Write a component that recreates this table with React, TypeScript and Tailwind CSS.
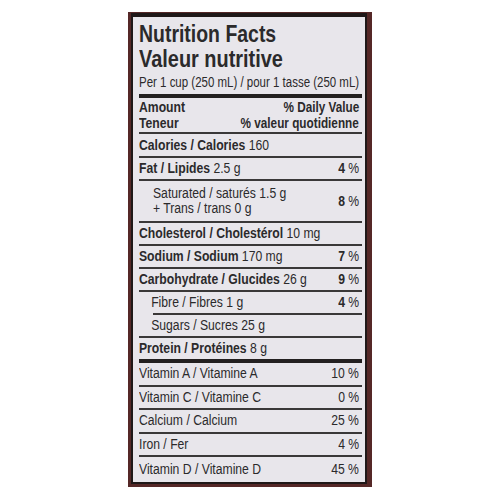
import React from "react";

const FONT = '"Liberation Sans", Arial, sans-serif';

function L({ children, className = "" }: { children: React.ReactNode; className?: string }) {
  return (
    <span className="flex-1 min-w-0 whitespace-nowrap">
      <span className={"inline-block origin-left scale-x-[0.87] whitespace-nowrap " + className}>{children}</span>
    </span>
  );
}

function P({ v, bold }: { v: string; bold?: boolean }) {
  return (
    <span className="shrink-0 pr-[3px] whitespace-nowrap">
      <span className="inline-block origin-right scale-x-[0.87] whitespace-nowrap">
        <span className={bold ? "font-bold" : ""}>{v}</span> %
      </span>
    </span>
  );
}

const ROW = "flex items-center text-[14px] border-b-[2px] border-[#3a3838]";

export default function App() {
  return (
    <div className="w-[500px] h-[500px] bg-white" style={{ fontFamily: FONT }}>
      <div className="pt-[12px] pl-[128px]">
        <div className="w-[244px] h-[475px] bg-[#552827] pl-[3px] pt-[1px] pr-[5px] pb-[3px]">
          <div className="h-full border-[#1f1818] border-l-[2px] border-r-[2px] border-b-[2px] border-t-[4px] bg-[#e8e6eb] pl-[6px] pr-[3px] pt-[4px] text-[#2b2a2b] flex flex-col">
            <div className="text-[24px] leading-[25px] font-bold whitespace-nowrap">
              <span className="inline-block origin-left scale-x-[0.81]">Nutrition Facts</span>
            </div>
            <div className="text-[24px] leading-[26px] font-bold whitespace-nowrap">
              <span className="inline-block origin-left scale-x-[0.83]">Valeur nutritive</span>
            </div>
            <div className="text-[14px] leading-[16px] mt-[2px] whitespace-nowrap">
              <span className="inline-block origin-left scale-x-[0.82]">Per 1 cup (250 mL) / pour 1 tasse (250 mL)</span>
            </div>
            <div className="h-[4px] bg-[#232020] mt-[4px]" />
            <div className="h-[36px] flex flex-col justify-center font-bold text-[14px] leading-[16px] border-b-[2px] border-[#3a3838]">
              <div className="flex">
                <L>Amount</L>
                <span className="shrink-0 pr-[3px]"><span className="inline-block origin-right scale-x-[0.84] whitespace-nowrap">% Daily Value</span></span>
              </div>
              <div className="flex">
                <L>Teneur</L>
                <span className="shrink-0 pr-[3px]"><span className="inline-block origin-right scale-x-[0.84] whitespace-nowrap">% valeur quotidienne</span></span>
              </div>
            </div>

            <div className={"h-[24px] " + ROW}>
              <L><b>Calories / Calories</b> 160</L>
            </div>
            <div className={"h-[23px] " + ROW}>
              <L><b>Fat / Lipides</b> 2.5 g</L>
              <P v="4" bold />
            </div>
            <div className={"h-[42px] leading-[15px] " + ROW}>
              <div className="flex-1 min-w-0 pl-[14px] flex flex-col whitespace-nowrap">
                <span><span className="inline-block origin-left scale-x-[0.87]">Saturated / saturés 1.5 g</span></span>
                <span><span className="inline-block origin-left scale-x-[0.87]">+ Trans / trans 0 g</span></span>
              </div>
              <P v="8" bold />
            </div>
            <div className={"h-[23px] " + ROW}>
              <L><b>Cholesterol / Cholestérol</b> 10 mg</L>
            </div>
            <div className={"h-[23px] " + ROW}>
              <L><b>Sodium / Sodium</b> 170 mg</L>
              <P v="7" bold />
            </div>
            <div className={"h-[23px] " + ROW}>
              <L><b>Carbohydrate / Glucides</b> 26 g</L>
              <P v="9" bold />
            </div>
            <div className="h-[23px] flex flex-col text-[14px]">
              <div className="flex-1 flex items-center">
                <L className="pl-[14px]">Fibre / Fibres 1 g</L>
                <P v="4" bold />
              </div>
              <div className="ml-[14px] h-[2px] bg-[#3a3838]" />
            </div>
            <div className={"h-[23px] " + ROW}>
              <L className="pl-[14px]">Sugars / Sucres 25 g</L>
            </div>
            <div className="h-[21px] flex items-center text-[14px]">
              <L><b>Protein / Protéines</b> 8 g</L>
            </div>
            <div className="h-[4px] bg-[#232020]" />

            <div className={"h-[23.5px] " + ROW}>
              <L>Vitamin A / Vitamine A</L>
              <P v="10" />
            </div>
            <div className={"h-[23.5px] " + ROW}>
              <L>Vitamin C / Vitamine C</L>
              <P v="0" />
            </div>
            <div className={"h-[23.5px] " + ROW}>
              <L>Calcium / Calcium</L>
              <P v="25" />
            </div>
            <div className={"h-[23.5px] " + ROW}>
              <L>Iron / Fer</L>
              <P v="4" />
            </div>
            <div className="flex-1 flex items-center text-[14px]">
              <L>Vitamin D / Vitamine D</L>
              <P v="45" />
            </div>
          </div>
        </div>
      </div>
    </div>
  );
}
